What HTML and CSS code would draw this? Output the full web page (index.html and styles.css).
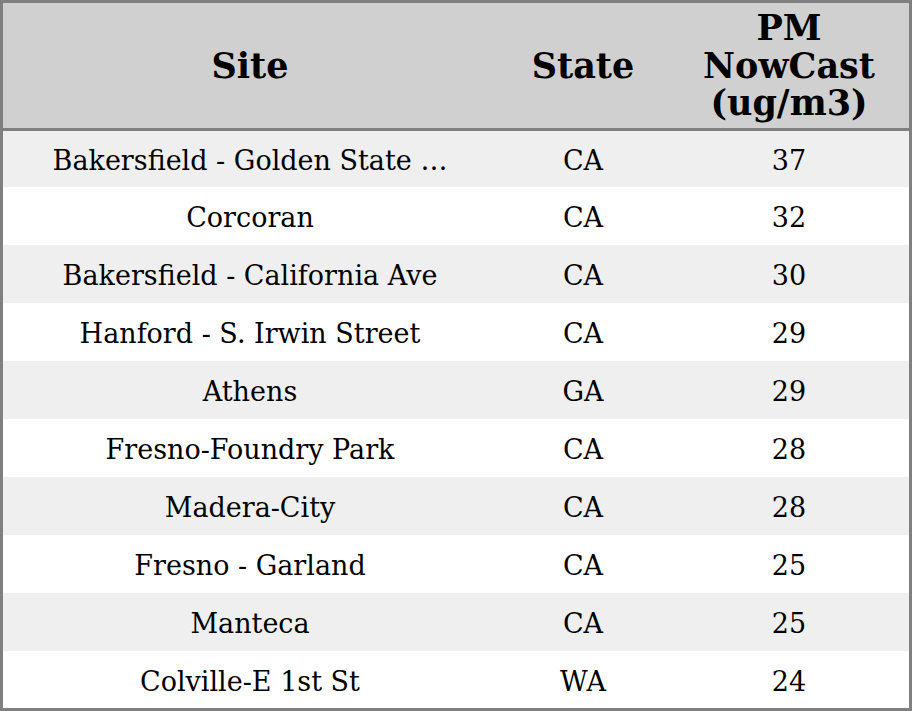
FILE: index.html
```html
<!DOCTYPE html>
<html>
<head>
<meta charset="utf-8">
<link rel="stylesheet" href="styles.css">
</head>
<body>
<table class="grid">
  <thead>
    <tr>
      <th class="c-site">Site</th>
      <th class="c-state">State</th>
      <th class="c-pm">PM<br>NowCast<br>(ug/m3)</th>
    </tr>
  </thead>
  <tbody>
    <tr><td>Bakersfield - Golden State …</td><td>CA</td><td>37</td></tr>
    <tr><td>Corcoran</td><td>CA</td><td>32</td></tr>
    <tr><td>Bakersfield - California Ave</td><td>CA</td><td>30</td></tr>
    <tr><td>Hanford - S. Irwin Street</td><td>CA</td><td>29</td></tr>
    <tr><td>Athens</td><td>GA</td><td>29</td></tr>
    <tr><td>Fresno-Foundry Park</td><td>CA</td><td>28</td></tr>
    <tr><td>Madera-City</td><td>CA</td><td>28</td></tr>
    <tr><td>Fresno - Garland</td><td>CA</td><td>25</td></tr>
    <tr><td>Manteca</td><td>CA</td><td>25</td></tr>
    <tr><td>Colville-E 1st St</td><td>WA</td><td>24</td></tr>
  </tbody>
</table>
</body>
</html>
```
FILE: styles.css
```css
html, body {
  margin: 0;
  padding: 0;
  background: #ffffff;
}
.grid {
  width: 912px;
  border-collapse: separate;
  border-spacing: 0;
  border: 3px solid #808080;
  box-sizing: border-box;
  font-family: "DejaVu Serif", serif;
  color: #000;
  table-layout: fixed;
}
.grid th {
  background: #d0d0d0;
  font-size: 35px;
  font-weight: bold;
  line-height: 37.5px;
  height: 128px;
  padding: 0;
  border-bottom: 3px solid #808080;
  box-sizing: border-box;
  text-align: center;
  vertical-align: middle;
}
.c-site { width: 494px; }
.c-state { width: 172px; }
.c-pm { width: 240px; }
.grid td {
  font-size: 27px;
  line-height: 30px;
  height: 58px;
  padding: 4px 0 0;
  box-sizing: border-box;
  text-align: center;
  vertical-align: middle;
  white-space: nowrap;
  overflow: hidden;
}
.grid tbody tr:first-child td { height: 56px; }
.grid tbody tr:last-child td { height: 57px; }
.grid tbody tr:nth-child(odd) td { background: #efefef; }
.grid tbody tr:nth-child(even) td { background: #ffffff; }
.grid .ellip { letter-spacing: 2px; }
```
